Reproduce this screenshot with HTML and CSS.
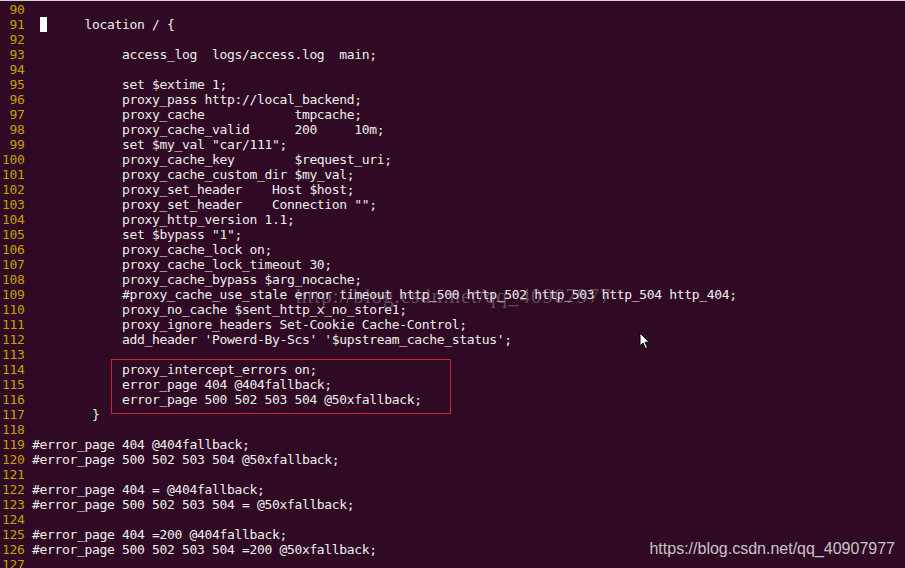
FILE: index.html
```html
<!DOCTYPE html>
<html>
<head>
<meta charset="utf-8">
<link rel="stylesheet" href="styles.css">
</head>
<body>
<div class="screen">
<div class="term">
<div class="line"><span class="ln"> 90 </span></div>
<div class="line"><span class="ln"> 91 </span> <span class="cur"> </span>     location / {</div>
<div class="line"><span class="ln"> 92 </span></div>
<div class="line"><span class="ln"> 93 </span>            access_log  logs/access.log  main;</div>
<div class="line"><span class="ln"> 94 </span></div>
<div class="line"><span class="ln"> 95 </span>            set $extime 1;</div>
<div class="line"><span class="ln"> 96 </span>            proxy_pass http://local_backend;</div>
<div class="line"><span class="ln"> 97 </span>            proxy_cache            tmpcache;</div>
<div class="line"><span class="ln"> 98 </span>            proxy_cache_valid      200     10m;</div>
<div class="line"><span class="ln"> 99 </span>            set $my_val "car/111";</div>
<div class="line"><span class="ln">100 </span>            proxy_cache_key        $request_uri;</div>
<div class="line"><span class="ln">101 </span>            proxy_cache_custom_dir $my_val;</div>
<div class="line"><span class="ln">102 </span>            proxy_set_header    Host $host;</div>
<div class="line"><span class="ln">103 </span>            proxy_set_header    Connection "";</div>
<div class="line"><span class="ln">104 </span>            proxy_http_version 1.1;</div>
<div class="line"><span class="ln">105 </span>            set $bypass "1";</div>
<div class="line"><span class="ln">106 </span>            proxy_cache_lock on;</div>
<div class="line"><span class="ln">107 </span>            proxy_cache_lock_timeout 30;</div>
<div class="line"><span class="ln">108 </span>            proxy_cache_bypass $arg_nocache;</div>
<div class="line"><span class="ln">109 </span>            #proxy_cache_use_stale error timeout http_500 http_502 http_503 http_504 http_404;</div>
<div class="line"><span class="ln">110 </span>            proxy_no_cache $sent_http_x_no_store1;</div>
<div class="line"><span class="ln">111 </span>            proxy_ignore_headers Set-Cookie Cache-Control;</div>
<div class="line"><span class="ln">112 </span>            add_header 'Powerd-By-Scs' '$upstream_cache_status';</div>
<div class="line"><span class="ln">113 </span></div>
<div class="line"><span class="ln">114 </span>            proxy_intercept_errors on;</div>
<div class="line"><span class="ln">115 </span>            error_page 404 @404fallback;</div>
<div class="line"><span class="ln">116 </span>            error_page 500 502 503 504 @50xfallback;</div>
<div class="line"><span class="ln">117 </span>        }</div>
<div class="line"><span class="ln">118 </span></div>
<div class="line"><span class="ln">119 </span>#error_page 404 @404fallback;</div>
<div class="line"><span class="ln">120 </span>#error_page 500 502 503 504 @50xfallback;</div>
<div class="line"><span class="ln">121 </span></div>
<div class="line"><span class="ln">122 </span>#error_page 404 = @404fallback;</div>
<div class="line"><span class="ln">123 </span>#error_page 500 502 503 504 = @50xfallback;</div>
<div class="line"><span class="ln">124 </span></div>
<div class="line"><span class="ln">125 </span>#error_page 404 =200 @404fallback;</div>
<div class="line"><span class="ln">126 </span>#error_page 500 502 503 504 =200 @50xfallback;</div>
<div class="line"><span class="ln">127 </span></div>
</div>
<div class="redbox"></div>
<div class="wm">http://blog.csdn.net/qq_40907977</div>
<svg class="mouse" width="12" height="18" viewBox="0 0 12 18"><path d="M1 1 L1 14 L4 11 L6.5 16.5 L8.5 15.5 L6 10.2 L10.2 10.2 Z" fill="#ffffff" stroke="#000000" stroke-width="1" stroke-linejoin="round"/></svg>
<div class="credit">https://blog.csdn.net/qq_40907977</div>
</div>
</body>
</html>
```
FILE: styles.css
```css
html, body {
  margin: 0;
  padding: 0;
  background: #300a24;
}
.screen {
  position: relative;
  width: 905px;
  height: 568px;
  overflow: hidden;
  background: #300a24;
  border-top: 1px solid #d8d0d6;
  box-sizing: border-box;
}
.term {
  padding: 1px 0 0 2px;
  font-family: "DejaVu Sans Mono", "Liberation Mono", monospace;
  font-size: 13px;
  letter-spacing: -0.33px;
  color: #eeeeec;
}
.line {
  height: 15px;
  line-height: 15px;
  white-space: pre;
}
.ln {
  color: #c4a000;
}
.cur {
  background: #ffffff;
}
.redbox {
  position: absolute;
  left: 111px;
  top: 358px;
  width: 338px;
  height: 53px;
  border: 1px solid #d1232d;
}
.wm {
  position: absolute;
  left: 296px;
  top: 283px;
  font-family: "Liberation Serif", serif;
  font-size: 21px;
  letter-spacing: 1px;
  color: rgba(190, 180, 188, 0.4);
  white-space: nowrap;
}
.mouse {
  position: absolute;
  left: 639px;
  top: 331px;
}
.credit {
  position: absolute;
  right: 10px;
  top: 539px;
  font-family: "Liberation Sans", Arial, sans-serif;
  font-size: 16px;
  color: #c9c3c8;
}
```
